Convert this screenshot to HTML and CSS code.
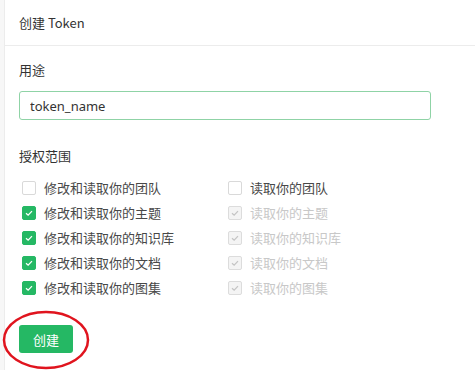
FILE: index.html
```html
<!DOCTYPE html>
<html lang="zh">
<head>
<meta charset="utf-8">
<link rel="stylesheet" href="styles.css">
</head>
<body>
<div class="panel">
  <div class="header">创建 Token</div>
  <div class="content">
    <div class="label">用途</div>
    <input class="input" type="text" value="token_name">
    <div class="label scope">授权范围</div>
    <div class="grid">
      <label class="item"><span class="box"></span><span class="text">修改和读取你的团队</span></label>
      <label class="item"><span class="box"></span><span class="text">读取你的团队</span></label>
      <label class="item"><span class="box on"><svg viewBox="0 0 14 14"><path d="M3.5 7.2 6 9.5 10.5 4.8"/></svg></span><span class="text">修改和读取你的主题</span></label>
      <label class="item dis"><span class="box"><svg viewBox="0 0 14 14"><path d="M3.5 7.2 6 9.5 10.5 4.8"/></svg></span><span class="text">读取你的主题</span></label>
      <label class="item"><span class="box on"><svg viewBox="0 0 14 14"><path d="M3.5 7.2 6 9.5 10.5 4.8"/></svg></span><span class="text">修改和读取你的知识库</span></label>
      <label class="item dis"><span class="box"><svg viewBox="0 0 14 14"><path d="M3.5 7.2 6 9.5 10.5 4.8"/></svg></span><span class="text">读取你的知识库</span></label>
      <label class="item"><span class="box on"><svg viewBox="0 0 14 14"><path d="M3.5 7.2 6 9.5 10.5 4.8"/></svg></span><span class="text">修改和读取你的文档</span></label>
      <label class="item dis"><span class="box"><svg viewBox="0 0 14 14"><path d="M3.5 7.2 6 9.5 10.5 4.8"/></svg></span><span class="text">读取你的文档</span></label>
      <label class="item"><span class="box on"><svg viewBox="0 0 14 14"><path d="M3.5 7.2 6 9.5 10.5 4.8"/></svg></span><span class="text">修改和读取你的图集</span></label>
      <label class="item dis"><span class="box"><svg viewBox="0 0 14 14"><path d="M3.5 7.2 6 9.5 10.5 4.8"/></svg></span><span class="text">读取你的图集</span></label>
    </div>
    <div class="actions">
      <button class="btn">创建</button>
      <svg class="ring" viewBox="0 0 88 60"><ellipse cx="44" cy="30" rx="42" ry="28"/></svg>
    </div>
  </div>
</div>
</body>
</html>
```

FILE: styles.css
```css
* { box-sizing: border-box; }
html, body {
  margin: 0;
  height: 100%;
}
body {
  background: #f7f7f7;
  font-family: "Noto Sans CJK SC", "Noto Sans", sans-serif;
  font-size: 13px;
  color: #333;
  overflow: hidden;
}
.panel {
  margin-left: 4px;
  min-height: 100%;
  background: #fff;
  border-left: 1px solid #ececec;
}
.header {
  height: 46px;
  line-height: 45px;
  padding-left: 14px;
  border-bottom: 1px solid #ececec;
  color: #333;
}
.content {
  padding: 14px 0 0 14px;
}
.label {
  line-height: 20px;
  color: #333;
}
.input {
  display: block;
  margin-top: 11px;
  width: 412px;
  height: 29px;
  border: 1px solid #8fd3a6;
  border-radius: 3px;
  padding: 0 10px;
  font-family: "Noto Sans", "Noto Sans CJK SC", sans-serif;
  font-size: 13px;
  color: #333;
  outline: none;
}
.label.scope {
  margin-top: 26px;
}
.grid {
  margin-top: 9px;
  padding-left: 3px;
  display: grid;
  grid-template-columns: 206px 200px;
}
.item {
  display: flex;
  align-items: center;
  height: 25px;
  gap: 8px;
  color: #484848;
}
.box {
  width: 14px;
  height: 14px;
  border: 1px solid #d9d9d9;
  border-radius: 2px;
  background: #fff;
  display: flex;
}
.box svg {
  width: 12px;
  height: 12px;
}
.box path {
  fill: none;
  stroke: #fff;
  stroke-width: 1.5;
}
.box.on {
  background: #25b864;
  border-color: #25b864;
}
.item.dis .box {
  background: #f4f4f4;
  border-color: #dcdcdc;
}
.item.dis .box path {
  stroke: #c4c4c4;
}
.item.dis .text {
  color: #c8c8c8;
}
.actions {
  position: relative;
  margin-top: 25px;
  width: 100px;
  height: 40px;
}
.btn {
  display: block;
  width: 54px;
  height: 28px;
  border: none;
  border-radius: 3px;
  background: #25b864;
  color: #fff;
  font-family: "Noto Sans CJK SC", sans-serif;
  font-size: 13px;
  padding: 0;
}
.ring {
  position: absolute;
  left: -17px;
  top: -15px;
  width: 88px;
  height: 60px;
  overflow: visible;
}
.ring ellipse {
  fill: none;
  stroke: #e0141e;
  stroke-width: 2.5;
}
```
